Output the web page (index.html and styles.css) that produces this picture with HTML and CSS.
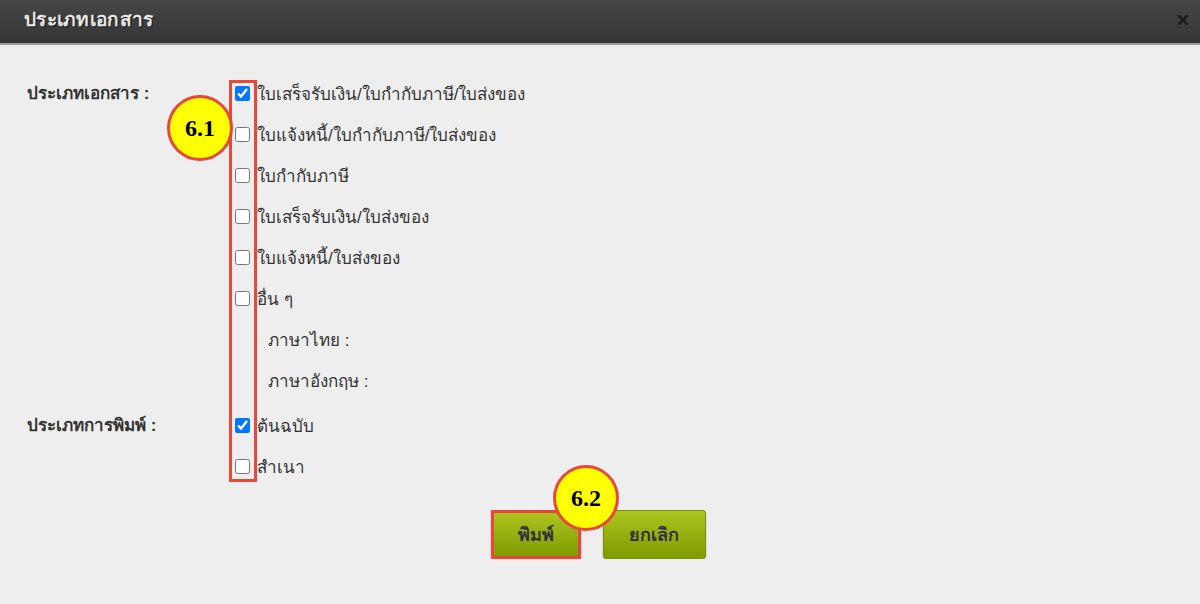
FILE: index.html
```html
<!DOCTYPE html>
<html>

<head>
    <meta charset="utf-8">
    <link rel="stylesheet" href="styles.css">
</head>

<body>
    <div class="header">
        <span class="title">ประเภทเอกสาร</span>
        <svg class="close" width="10" height="10" viewBox="0 0 10 10">
            <path d="M1 1 L9 9 M9 1 L1 9" stroke="#1c1c1c" stroke-width="2.6" stroke-linecap="square" />
        </svg>
    </div>

    <div class="content">
        <div class="form">
            <div class="label">ประเภทเอกสาร :</div>
            <div class="options">
                <div class="mark-box"></div>
                <div class="badge badge-one">6.1</div>
                <label class="row"><input type="checkbox" checked>ใบเสร็จรับเงิน/ใบกำกับภาษี/ใบส่งของ</label>
                <label class="row"><input type="checkbox">ใบแจ้งหนี้/ใบกำกับภาษี/ใบส่งของ</label>
                <label class="row"><input type="checkbox">ใบกำกับภาษี</label>
                <label class="row"><input type="checkbox">ใบเสร็จรับเงิน/ใบส่งของ</label>
                <label class="row"><input type="checkbox">ใบแจ้งหนี้/ใบส่งของ</label>
                <label class="row"><input type="checkbox">อื่น ๆ</label>
                <div class="row sub">ภาษาไทย :</div>
                <div class="row sub">ภาษาอังกฤษ :</div>
            </div>

            <div class="label label-gap">ประเภทการพิมพ์ :</div>
            <div class="options label-gap">
                <label class="row"><input type="checkbox" checked>ต้นฉบับ</label>
                <label class="row"><input type="checkbox">สำเนา</label>
            </div>
        </div>

        <div class="buttons">
            <div class="badge badge-two">6.2</div>
            <button class="btn btn-print">พิมพ์</button>
            <button class="btn btn-cancel">ยกเลิก</button>
        </div>
    </div>
</body>

</html>
```

FILE: styles.css
```css
body {
    margin: 0;
    background-color: #eeeeee;
    font-family: Tahoma, "Liberation Sans", "Noto Sans", sans-serif;
    color: #333333;
}

.header {
    height: 37px;
    padding: 0 12px 6px 24px;
    background: linear-gradient(#464646, #353535);
    border-bottom: 2px solid #9c9c9c;
    display: flex;
    align-items: center;
    justify-content: space-between;
}

.title {
    color: #e8e8e8;
    font-size: 19px;
    font-weight: bold;
    letter-spacing: 0.3px;
    text-shadow: 1px 1px 1px rgba(0, 0, 0, 0.6);
}

.close {
    margin-top: 2px;
}

.content {
    padding: 28px 0 0 27px;
}

.form {
    display: grid;
    grid-template-columns: 202px auto;
}

.label {
    font-size: 17px;
    font-weight: bold;
    height: 41px;
    line-height: 41px;
}

.label-gap {
    margin-top: 4px;
}

.options {
    position: relative;
}

.row {
    display: flex;
    align-items: center;
    height: 41px;
    font-size: 17px;
}

.row input {
    width: 15px;
    height: 15px;
    margin: 0 7px 1px 6px;
}

.sub {
    padding-left: 39px;
}

.mark-box {
    position: absolute;
    left: 0;
    top: 7px;
    width: 22px;
    height: 396px;
    border: 3px solid #e9473c;
    pointer-events: none;
}

.badge {
    position: absolute;
    width: 60px;
    height: 60px;
    border-radius: 50%;
    background-color: #ffff00;
    border: 3px solid #e9473c;
    display: flex;
    align-items: center;
    justify-content: center;
    font-family: "Liberation Serif", serif;
    font-weight: bold;
    font-size: 24px;
    color: #000000;
}

.badge-one {
    left: -62px;
    top: 22px;
}

.buttons {
    position: relative;
    display: flex;
    justify-content: center;
    gap: 22px;
    margin: 23px 0 0 -31px;
}

.badge-two {
    left: 557px;
    top: -45px;
    z-index: 2;
}

.btn {
    height: 49px;
    border: 1px solid #7a9200;
    border-radius: 3px;
    background: linear-gradient(#abc41f, #809b00);
    font-family: Tahoma, "Liberation Sans", "Noto Sans", sans-serif;
    font-size: 18px;
    font-weight: bold;
    color: #333333;
    text-shadow: 0 1px 0 rgba(255, 255, 255, 0.2);
    box-shadow: 0 1px 2px rgba(0, 0, 0, 0.25);
}

.btn-print {
    width: 90px;
    border: 3px solid #e9473c;
    border-radius: 0;
}

.btn-cancel {
    width: 103px;
}
```
